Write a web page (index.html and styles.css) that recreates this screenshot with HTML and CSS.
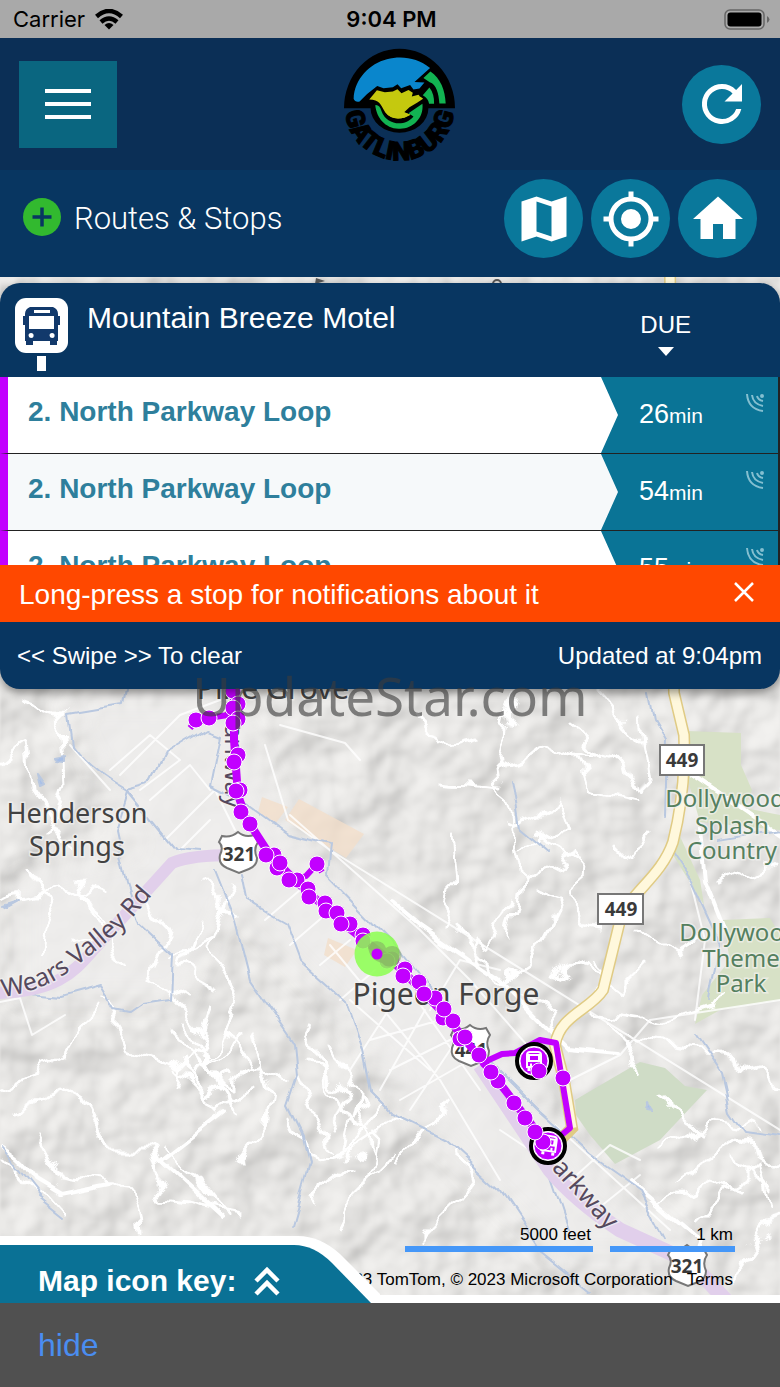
FILE: index.html
```html
<!DOCTYPE html>
<html lang="en">
<head>
<meta charset="utf-8">
<meta name="viewport" content="width=device-width, initial-scale=1">
<title>Gatlinburg Transit</title>
<link rel="stylesheet" href="styles.css">
</head>
<body>
<div class="status">
  <span class="carrier">Carrier
    <svg width="28" height="21" viewBox="0 0 28 21" fill="none" stroke="#000" stroke-width="4.500"><path d="M1.500 7.500Q14-3.500 26.500 7.500M6 13Q14 6 22 13"/><path d="M9.500 16Q14 12 18.500 16L14 20.500z" fill="#000" stroke="none"/></svg>
  </span>
  <span class="clock">9:04 PM</span>
  <svg class="battery" width="46" height="21" viewBox="0 0 46 21"><rect x="1" y="1" width="39" height="19" rx="5" fill="none" stroke="#666" stroke-width="1.500"/><rect x="3.500" y="3.500" width="34" height="14" rx="3" fill="#000"/><path d="M43 7q5 3.500 0 7z" fill="#666"/></svg>
</div>

<header class="topbar">
  <button class="menu" aria-label="Menu"><span></span><span></span><span></span></button>
  <svg class="logo" viewBox="38 20 340 344" role="img" aria-label="Gatlinburg">
    <path d="M41 203A167 179 0 0 1 375 203H295A87 74 0 0 1 121 203z"/>
    <path fill="#0a86cc" d="M70 175C72 115 120 68 170 56C215 44 262 52 300 82L253 124L283 126L268 144L250 147L240 133L213 143L202 131L188 140L160 143L141 136Q110 158 88 183Q74 186 70 175z"/>
    <path fill="#c5c90e" stroke="#000" stroke-width="14" paint-order="stroke" d="M117 177L140 149L164 155L188 153L202 146L214 158L235 148L248 157L245 168L265 163L279 175L262 186L238 200L222 215L241 223L224 231Q185 242 164 214C150 190 148 178 117 177z"/>
    <path fill="#12b352" d="M135 194Q148 192 154 212C168 252 222 262 250 228L235 218L277 190C282 235 245 268 205 265C165 263 139 232 135 194z"/>
    <path fill="#c5c90e" d="M164 214Q185 242 224 231L241 223L222 215L200 200z"/>
    <path fill="#12b352" stroke="#000" stroke-width="14" paint-order="stroke" d="M301 93C332 114 345 149 347 189H328C326 160 319 130 299 125L280 112zM298 141Q313 160 312 190H297Q295 173 278 164z"/>
    <path id="ring" d="M44 202A163 157 0 0 0 372 202" fill="none"/>
    <text class="ring-text"><textPath href="#ring" startOffset="50%">GATLINBURG</textPath></text>
  </svg>
  <button class="round" aria-label="Refresh"><svg viewBox="0 0 24 24"><path d="M17.650 6.350A7.960 7.960 0 0 0 12 4a8 8 0 1 0 7.730 10h-2.080A6 6 0 1 1 12 6c1.660 0 3.140.690 4.220 1.780L13 11h7V4z"/></svg></button>
</header>

<nav class="toolbar">
  <button class="routes">
    <svg width="38" height="38" viewBox="0 0 38 38"><circle cx="19" cy="19" r="19" fill="#32b92f"/><path d="M19 9.500v19M9.500 19h19" stroke="#083661" stroke-width="3.500"/></svg>
    <span>Routes &amp; Stops</span>
  </button>
  <div class="tools">
    <button class="round" aria-label="Map"><svg viewBox="0 0 24 24"><path fill-rule="evenodd" d="M3 5L9 3L15 5L21 3V19L15 21L9 19L3 21zM9 5V17L15 19V7z"/></svg></button>
    <button class="round" aria-label="My location"><svg viewBox="0 0 24 24"><path d="M12 8a4 4 0 1 0 0 8 4 4 0 0 0 0-8zm8.940 3A9 9 0 0 0 13 3.060V1h-2v2.060A9 9 0 0 0 3.060 11H1v2h2.060A9 9 0 0 0 11 20.940V23h2v-2.060A9 9 0 0 0 20.940 13H23v-2zM12 19a7 7 0 1 1 0-14 7 7 0 0 1 0 14z"/></svg></button>
    <button class="round" aria-label="Home"><svg viewBox="0 0 24 24"><path d="M10 20v-6h4v6h5v-8h3L12 3 2 12h3v8z"/></svg></button>
  </div>
</nav>

<main class="map">
  <svg class="canvas" viewBox="0 277 780 1026" preserveAspectRatio="xMidYMin slice">
    <defs>
      <filter id="relief" x="0" y="0" width="100%" height="100%" color-interpolation-filters="sRGB">
        <feTurbulence type="fractalNoise" baseFrequency="0.018" numOctaves="3" seed="11"/>
        <feDiffuseLighting surfaceScale="8" diffuseConstant="1.060" lighting-color="#efeeec"><feDistantLight azimuth="225" elevation="62"/></feDiffuseLighting>
        <feGaussianBlur stdDeviation="1"/>
      </filter>
      <filter id="wobble" x="-5%" y="-5%" width="110%" height="110%">
        <feTurbulence type="fractalNoise" baseFrequency="0.035" numOctaves="2" seed="5"/>
        <feDisplacementMap in="SourceGraphic" scale="34" xChannelSelector="R" yChannelSelector="G"/>
      </filter>
      <filter id="bend" x="-5%" y="-5%" width="110%" height="110%">
        <feTurbulence type="fractalNoise" baseFrequency="0.03" numOctaves="1" seed="8"/>
        <feDisplacementMap in="SourceGraphic" scale="16" xChannelSelector="R" yChannelSelector="G"/>
      </filter>
      <filter id="soft"><feGaussianBlur stdDeviation="12"/></filter>
      <g id="bus" fill="none" stroke="#fff"><path stroke-width="2" d="M-7 6V-6q0-3 3-3h8q3 0 3 3V6zM-5 0H5V-6H-5z"/><path stroke-width="3" d="M-5 7v3M5 7v3M-4 4h2M2 4h2"/></g>
    </defs>
    <rect y="277" width="780" height="1026" fill="#ebeae8"/>
    <rect y="277" width="780" height="1026" filter="url(#relief)" opacity=".42"/>
    <g fill="#efeeed" opacity=".85" filter="url(#soft)">
      <path d="M60 700L230 700L300 850L380 900L460 980L560 1130L700 1260H560L440 1140L330 1000L230 900L180 1000H20V880L140 850z"/>
    </g>
    <g class="park">
      <path d="M687 731L741 733V765L752 790L745 808L780 815V830L700 822L685 770zM678 832L700 880L704 905L670 850zM722 920L770 918L780 935V1000L720 1010L695 1024L702 995L730 960z"/>
      <path fill="#cfdcc6" d="M575 1100L640 1062L665 1068L685 1086L707 1090L660 1140L615 1164L590 1135L576 1115z"/>
    </g>
    <g fill="#f3dfcb" opacity=".8"><path d="M262 797L288 807L275 824L258 812zM299 799L364 834L346 858L285 820zM328 938L357 950L345 967L324 955z"/></g>

    <g class="road" filter="url(#wobble)">
      <path d="M0 760L25 740L30 790L70 850M20 700L60 715L65 780L50 830M0 900L60 885L110 900M30 870L50 910L40 960M80 880L110 930L70 940M90 1010L60 1060L0 1090M100 1000L130 1050L190 1070M20 1110L60 1090L90 1110L110 1150L150 1150L165 1200L240 1215M40 1140L60 1180L130 1190L140 1230M0 1150L30 1180L60 1215M170 1030L230 1090L260 1060L290 1080M180 1070L220 1110L250 1090M210 1010L180 1090M240 1000L200 1080M255 1040L270 1090L265 1130L240 1160M160 1150L200 1180L230 1220M305 1020L320 1060L340 1110L370 1130M290 1120L310 1160L350 1150L380 1110M400 1150L360 1190L340 1230M310 1200L350 1170M420 1240L470 1190L460 1150M150 900L170 940L150 980L190 1000M200 920L185 970L220 990M235 880L210 950L240 1000M175 960L215 940"/>
      <path d="M420 720L440 750L480 740M515 695L500 760L510 820L520 880L510 940M500 770L560 745L610 760L650 790L640 720M580 750L590 790L640 800M505 830L560 800L570 830L520 850M445 780L510 785M450 830L455 890L440 930M610 840L630 860L650 830M520 880L580 850L575 900L600 930M510 900L490 950L470 940L480 970M535 890L560 900L530 960L500 980M550 980L580 960L620 990L640 970M450 930L500 980L560 1010L540 1040M640 930L670 950L700 940M600 1010L660 1020L720 1000M630 1040L720 1050L780 1090M660 1150L710 1120L760 1130M680 1180L740 1140L780 1170M700 1220L760 1160L770 1210M730 1280L780 1210M660 1100L700 1130M650 1210L710 1180L740 1190M590 960L610 980L590 1000M720 880L760 860L780 870"/>
      <path d="M185 1060L205 1095L235 1075M200 1050L235 1110M225 1030L250 1070M190 1030L210 1065L245 1040M310 1060L345 1090L330 1130M330 1050L355 1100L345 1150M350 1090L375 1150M300 1080L330 1150M380 1130L370 1180M90 900L120 960M165 990L200 1030M200 880L235 920M340 1160L400 1120M570 720L600 760M600 690L640 740M540 830L580 860M450 1100L400 1160M740 1160L770 1190M610 1020L640 1070"/>
    </g>
    <g class="minor">
      <path d="M0 1002L20 998L32 1035L65 1015M110 770L150 735L180 760L140 790M120 775L180 715L220 700M150 800L190 765L210 790M165 840L215 790L235 830M180 850L210 820M70 745L110 790M265 745L288 820L330 850L780 1130M290 815L420 930L470 980L540 1060M330 945L400 1030L440 1080L500 1180M350 1000L430 1070M370 1040L440 1020M390 1070L460 1035M400 1100L470 1060M395 1000L350 1070M425 1010L380 1090M450 1050L410 1110M300 890L265 920M325 915L290 945M350 940L320 965M375 970L340 1000M410 990L480 1090M500 970L460 960L430 1010M280 725L345 743L360 760M610 1145L640 1160M570 1080L620 1055L650 1020L780 1000M555 1125L670 1230M560 1190L610 1145M590 1215L640 1175M530 1150L500 1130M695 1020L705 940L690 880"/>
    </g>
    <g class="avenue" filter="url(#bend)"><path d="M390 900L420 925L500 980L570 1050L620 1055M700 830L705 880L725 930M685 770L780 835M630 1180L700 1240L690 1270M0 1145Q25 1160 35 1180L60 1195L110 1185M225 1110L160 1160L220 1215"/></g>
    <g class="water" filter="url(#bend)">
      <path d="M125 689L122 706L68 715L72 745Q90 770 127 791L150 785L165 755L207 730L220 735L210 785L240 800L288 835L330 845L327 875L390 940L460 1030L540 1110L590 1155L640 1190L665 1240"/>
      <path d="M127 791L115 830L127 885L140 925L172 955L170 1000L143 1004L130 1013L115 1010L100 985L60 996L0 990M127 791L175 850L200 852M215 870L235 920L250 980L295 1045L298 1075L288 1105L303 1135L309 1165L292 1225M245 875L250 900L285 920L300 960L345 1000L362 1050L370 1090L395 1115L445 1140L500 1190L520 1220L540 1250L590 1290M650 689L655 720L667 740L665 820M670 850L690 880L720 945L710 1000M695 1035L722 1075L730 1110L745 1132L780 1137M0 1145L40 1195L65 1215M512 780L520 830L550 855M550 1170L570 1230M720 840L780 830"/>
      <path fill="#a7bfe8" d="M54 755l9-2v7l-7-1zM38 773l7 10-4 2zM0 908l16-5-13 7zM645 1108l2-5 4 6z"/>
    </g>
    <path class="highway" d="M-5 993C60 992 75 970 95 948L172 863Q190 855 235 855"/>
    <path class="highway wide" d="M480 1065L550 1170Q575 1200 620 1230L690 1262L735 1310"/>
    <path class="gold-edge" d="M670 270L674 693L684 735Q686 790 673 842C660 880 625 895 619 925L603 990C590 1010 560 1015 555 1045L564 1080L572 1128L562 1138"/>
    <path class="gold" d="M670 270L674 693L684 735Q686 790 673 842C660 880 625 895 619 925L603 990C590 1010 560 1015 555 1045L564 1080L572 1128"/>
    <path d="M316 278l9 3-10 3z" fill="#555"/><circle cx="497" cy="284" r="4" fill="none" stroke="#555" stroke-width="2"/>

    <g class="labels">
      <text class="place big" x="273" y="699">Pine Grove</text>
      <text class="place" x="77" y="823">Henderson</text><text class="place" x="77" y="856">Springs</text>
      <text class="place big" x="446" y="1005">Pigeon Forge</text>
      <g class="green"><text x="725" y="807">Dollywood</text><text x="732" y="834">Splash</text><text x="732" y="859">Country</text><text x="739" y="941">Dollywood</text><text x="741" y="967">Theme</text><text x="741" y="992">Park</text></g>
      <path id="wears" d="M3 997Q48 990 76 966Q112 940 134 916L190 852" fill="none"/>
      <text class="street"><textPath href="#wears">Wears Valley Rd</textPath></text>
      <path id="parkway" d="M541 1157L623 1248" fill="none"/>
      <text class="street"><textPath href="#parkway">Parkway</textPath></text>
      <text class="street" transform="translate(225 709) rotate(90)">Parkway</text>
    </g>
    <g class="sign">
      <rect x="660" y="745" width="44" height="30"/><text x="682" y="767">449</text>
      <rect x="598" y="894" width="45" height="30"/><text x="621" y="916">449</text>
      <path id="shield" d="M222 836Q231 838 238 832Q245 838 254 835L258 842Q253 849 257 858Q257 866 249 869L239 873L227 868Q218 864 220 855Q224 847 219 842z"/><text x="239" y="861">321</text>
      <use href="#shield" x="232" y="193"/><text x="471" y="1057">441</text>
      <use href="#shield" x="449" y="413"/><text x="687" y="1273">321</text>
    </g>

    <path class="route" d="M234 680V740L238 795L246 818L270 855L300 885L345 925L400 968L445 1015L480 1058L505 1090L548 1146"/>
    <path class="route thin" d="M196 720L234 714M190 728L200 716M295 880L306 876L317 864L322 872M480 1064L502 1054L515 1053L540 1040L556 1043L562 1080L570 1128L558 1138"/>
    <g class="vehicle"><circle cx="534" cy="1061" r="17"/><circle class="disc" cx="534" cy="1061" r="14"/><use href="#bus" x="534" y="1061"/><circle cx="548" cy="1146" r="17"/><circle class="disc" cx="548" cy="1146" r="14"/><use href="#bus" transform="translate(549 1145) rotate(8)"/></g>
    <g class="stops">
      <circle cx="233" cy="691" r="8"/><circle cx="238" cy="704" r="8"/><circle cx="233" cy="708" r="8"/><circle cx="238" cy="719" r="8"/><circle cx="233" cy="723" r="8"/><circle cx="196" cy="720" r="8"/><circle cx="209" cy="718" r="8"/><circle cx="238" cy="755" r="8"/><circle cx="234" cy="762" r="8"/><circle cx="240" cy="790" r="8"/><circle cx="236" cy="791" r="8"/><circle cx="241" cy="812" r="8"/><circle cx="250" cy="824" r="8"/><circle cx="274" cy="855" r="8"/><circle cx="277" cy="868" r="8"/><circle cx="280" cy="863" r="8"/><circle cx="266" cy="855" r="8"/><circle cx="297" cy="880" r="8"/><circle cx="289" cy="880" r="8"/><circle cx="308" cy="889" r="8"/><circle cx="309" cy="897" r="8"/><circle cx="325" cy="903" r="8"/><circle cx="326" cy="911" r="8"/><circle cx="337" cy="913" r="8"/><circle cx="350" cy="924" r="8"/><circle cx="341" cy="924" r="8"/><circle cx="363" cy="935" r="8"/><circle cx="363" cy="941" r="8"/><circle cx="317" cy="864" r="8"/><circle cx="392" cy="959" r="8"/><circle cx="387" cy="961" r="8"/><circle cx="405" cy="969" r="8"/><circle cx="403" cy="976" r="8"/><circle cx="419" cy="982" r="8"/><circle cx="435" cy="998" r="8"/><circle cx="424" cy="994" r="8"/><circle cx="443" cy="1018" r="8"/><circle cx="453" cy="1021" r="8"/><circle cx="444" cy="1009" r="8"/><circle cx="460" cy="1039" r="8"/><circle cx="465" cy="1037" r="8"/><circle cx="479" cy="1055" r="8"/><circle cx="498" cy="1081" r="8"/><circle cx="491" cy="1072" r="8"/><circle cx="514" cy="1103" r="8"/><circle cx="525" cy="1118" r="8"/><circle cx="543" cy="1142" r="8"/><circle cx="535" cy="1132" r="8"/><circle cx="563" cy="1078" r="8"/><circle cx="539" cy="1071" r="8"/>
    </g>
    <circle cx="377" cy="954" r="22.500" fill="#8cff50" opacity=".86"/><path d="M368 946a10 10 0 0 1 18 2a9 9 0 0 1 12 15q-10 7-16 0q-13-3-14-17z" fill="#7f9f62" opacity=".5"/><circle cx="377" cy="954" r="5.500" fill="#c200ff"/>
  </svg>

  <section class="card">
    <header class="card-head">
      <svg width="53" height="73" viewBox="0 0 53 73"><rect width="53" height="55" rx="11" fill="#fff"/><path fill="#fff" d="M22 58h9v15h-9z"/><path fill="#12396b" fill-rule="evenodd" d="M15 9h23q5 2 5 7v2h2v9h-2v16h-1v4h-7v-4H18v4h-7v-4h-1V27H8v-9h2v-2q0-5 5-7zM14 18v13h25V18zM19 12v3h16v-3zM16 35a2.500 2.500 0 1 0 .1 5 2.500 2.500 0 0 0 0-5zM37 35a2.500 2.500 0 1 0 .1 5 2.500 2.500 0 0 0 0-5z"/></svg>
      <h1>Mountain Breeze Motel</h1>
      <div class="due">DUE<svg width="16" height="9" viewBox="0 0 16 9"><path d="M0 0h16L8 9z" fill="#fff"/></svg></div>
    </header>
    <ul class="arrivals">
      <li><span class="line">2. North Parkway Loop</span><span class="eta">26<small>min</small><svg class="live" viewBox="0 0 18 19"><path d="M1 1Q2 16 17 18M6 2Q7 11 17 13"/><path d="M11 3Q12 7 17 8"/><circle cx="16" cy="3" r="1"/></svg></span></li>
      <li><span class="line">2. North Parkway Loop</span><span class="eta">54<small>min</small><svg class="live" viewBox="0 0 18 19"><path d="M1 1Q2 16 17 18M6 2Q7 11 17 13"/><path d="M11 3Q12 7 17 8"/><circle cx="16" cy="3" r="1"/></svg></span></li>
      <li><span class="line">2. North Parkway Loop</span><span class="eta">55<small>min</small><svg class="live" viewBox="0 0 18 19"><path d="M1 1Q2 16 17 18M6 2Q7 11 17 13"/><path d="M11 3Q12 7 17 8"/><circle cx="16" cy="3" r="1"/></svg></span></li>
    </ul>
    <div class="notice"><span>Long-press a stop for notifications about it</span>
      <button aria-label="Close"><svg width="20" height="20" viewBox="0 0 20 20" stroke="#fff" stroke-width="2.500"><path d="M1 1L19 19M19 1L1 19"/></svg></button></div>
    <footer class="card-foot"><span>&lt;&lt; Swipe &gt;&gt; To clear</span><span>Updated at 9:04pm</span></footer>
  </section>
  <div class="watermark">UpdateStar.com</div>

  <div class="legend">
    <div class="scales"><span class="feet">5000 feet</span><span class="km">1 km</span></div>
    <p class="credits"><span>© 2023 TomTom, © 2023 Microsoft Corporation</span><a href="#terms">Terms</a></p>
  </div>
  <div class="key">
    <svg class="key-shape" viewBox="0 0 380 67"><path fill="#fff" d="M0 0H298Q320 0 340 18L380 58V67H0z"/><path fill="#0a7195" d="M0 9H294Q314 9 332 27L371 67H0z"/></svg>
    <button>Map icon key: <svg width="26" height="30" viewBox="0 0 26 30" fill="none" stroke="#fff" stroke-width="4.500"><path d="M2 15L13 4L24 15M2 28L13 17L24 28"/></svg></button>
  </div>
</main>
<footer class="bottom"><a href="#hide">hide</a></footer>
</body>
</html>
```
FILE: styles.css
```css
* { box-sizing: border-box; }
body {
  margin: 0;
  min-height: 100vh;
  display: flex;
  flex-direction: column;
  font-family: "Liberation Sans", Arial, sans-serif;
  color: #fff;
  background: #505050;
}
button { margin: 0; padding: 0; border: 0; background: none; color: inherit; font: inherit; cursor: pointer; }
svg { display: block; }

.status {
  height: 38px;
  padding: 0 10px 0 13px;
  display: grid;
  grid-template-columns: 1fr auto 1fr;
  align-items: center;
  background: #a9a9a9;
  color: #000;
  font: 22px/38px Inter, sans-serif;
}
.carrier { display: flex; align-items: center; gap: 10px; }
.clock { font-weight: 600; }
.battery { justify-self: end; }

.topbar {
  height: 132px;
  padding: 0 19px;
  display: grid;
  grid-template-columns: 1fr auto 1fr;
  align-items: center;
  background: #0b2f56;
}
.menu {
  width: 98px;
  height: 87px;
  display: flex;
  flex-direction: column;
  align-items: center;
  justify-content: center;
  gap: 9px;
  background: #0a6680;
}
.menu span { width: 46px; height: 4px; background: #fff; }
.logo { width: 113px; height: 115px; margin-left: 19px; overflow: visible; }
.ring-text { font: 900 78px Roboto, sans-serif; text-anchor: middle; stroke: #000; stroke-width: 3px; }
.topbar .round { justify-self: end; }
.round {
  width: 79px;
  height: 79px;
  border-radius: 50%;
  display: grid;
  place-items: center;
  background: #0a789b;
}
.round svg { width: 60px; height: 60px; fill: #fff; }

.toolbar {
  height: 107px;
  padding: 0 23px 10px;
  display: flex;
  align-items: center;
  justify-content: space-between;
  background: #083661;
}
.routes { display: flex; align-items: center; gap: 13px; margin-bottom: 4px; font: 300 31px Roboto, sans-serif; }
.routes span { padding-top: 4px; }
.tools { display: flex; gap: 8px; }

.map {
  position: relative;
  flex: 1;
  display: flex;
  flex-direction: column;
  overflow: hidden;
}
.canvas { position: absolute; inset: 0; width: 100%; height: 100%; }
.park { fill: #d7e1c6; }
.road, .minor, .avenue, .water { fill: none; stroke: #fff; stroke-linejoin: round; stroke-linecap: round; }
.road { stroke-width: 3px; }
.minor { stroke-width: 2px; opacity: .8; }
.avenue { stroke-width: 4px; }
.water { stroke: #b9c8e0; stroke-width: 2px; }
.highway { fill: none; stroke: #e1cfeb; stroke-width: 12px; }
.wide { stroke-width: 15px; }
.gold-edge, .gold { fill: none; stroke: #e0cb84; stroke-width: 12px; }
.gold { stroke: #fff8dc; stroke-width: 9px; }
.labels { font-family: "Noto Sans", "Open Sans", sans-serif; text-anchor: middle; }
.labels text { paint-order: stroke; stroke: #f3f2f0; stroke-width: 3px; stroke-opacity: .7; }
.place { font-size: 27px; fill: #424242; }
.big { font-size: 30px; }
.green { font-size: 24px; fill: #55805f; }
.street { font-size: 25px; text-anchor: start; fill: #55495d; }
.sign { fill: #fff; stroke: #777; stroke-width: 2px; }
.sign text { font: 700 19px "Noto Sans", sans-serif; text-anchor: middle; fill: #3a3a3a; stroke: none; }
.route { fill: none; stroke: #c200ff; stroke-width: 8px; stroke-linejoin: round; }
.thin { stroke-width: 6px; }
.stops { fill: #c200ff; stroke: #fff; stroke-width: 1px; }
.vehicle { fill: #fff; stroke: #000; stroke-width: 4px; }
.vehicle .disc { fill: #c200ff; stroke: #fff; stroke-width: 1px; }
.vehicle use { stroke: none; }

.card {
  position: relative;
  margin-top: 6px;
  border-radius: 20px;
  overflow: hidden;
  background: #083661;
  box-shadow: 0 4px 8px rgba(0, 0, 0, .4);
}
.card-head { height: 94px; padding: 15px 89px 0 15px; display: flex; align-items: flex-start; gap: 19px; }
.card-head h1 { margin: 2px 0 0; flex: 1; font-size: 30px; line-height: 36px; font-weight: 400; }
.due { display: flex; flex-direction: column; align-items: center; gap: 8px; padding-top: 13px; font-size: 24px; line-height: 28px; }
.arrivals { height: 188px; margin: 0; padding: 0; overflow: hidden; list-style: none; }
.arrivals li {
  height: 77px;
  display: flex;
  border-left: 8px solid #c200ff;
  border-right: 2px solid #222;
  border-bottom: 1px solid #222;
  background: #fff;
}
.arrivals li:nth-child(even) { background: #f6f9fa; }
.line { flex: 1; padding-left: 20px; color: #2e7f9c; font-size: 28px; font-weight: 700; line-height: 70px; }
.eta {
  width: 177px;
  padding: 0 14px 0 38px;
  display: flex;
  align-items: baseline;
  background: #0a7496;
  clip-path: polygon(0 0, 100% 0, 100% 100%, 0 100%, 17px 50%);
  font-size: 27px;
  line-height: 74px;
}
.eta small { font-size: 21px; }
.live { width: 18px; height: 19px; margin: 16px 0 0 auto; align-self: flex-start; fill: none; stroke: #84bfd0; stroke-width: 2px; }
.notice {
  height: 57px;
  padding: 0 26px 0 19px;
  display: flex;
  align-items: center;
  justify-content: space-between;
  background: #ff4800;
  font-size: 28px;
}
.notice span { padding-top: 2px; }
.notice button { margin-bottom: 4px; }
.card-foot { height: 67px; padding: 0 18px 0 17px; display: flex; align-items: center; justify-content: space-between; font-size: 24px; }
.watermark {
  position: absolute;
  top: 384px;
  left: 0;
  right: 0;
  text-align: center;
  font: 53px/70px "Noto Sans", sans-serif;
  color: rgba(60, 60, 60, .62);
}

.legend { position: absolute; right: 45px; bottom: 13px; color: #000; font-size: 17px; line-height: 20px; }
.scales { display: flex; justify-content: flex-end; gap: 17px; text-align: right; }
.scales span { padding: 0 2px 2px 0; line-height: 18px; border-bottom: 6px solid #4597f8; }
.feet { width: 188px; }
.km { width: 125px; }
.credits { margin: 18px 2px 0 0; display: flex; justify-content: flex-end; gap: 14px; white-space: nowrap; }
.credits a { color: inherit; text-decoration: none; }
.key { position: relative; height: 67px; margin-top: auto; background: linear-gradient(#fff, #fff) bottom / 100% 8px no-repeat; }
.key-shape { position: absolute; left: 0; top: 0; width: 380px; height: 67px; }
.key button { position: relative; height: 67px; padding: 23px 0 0 38px; display: flex; align-items: center; gap: 18px; font-size: 30px; font-weight: 700; line-height: 32px; }

.bottom { height: 84px; padding-left: 38px; display: flex; align-items: center; font-size: 32px; background: #505050; }
.bottom a { color: #4a8df0; text-decoration: none; }
```
